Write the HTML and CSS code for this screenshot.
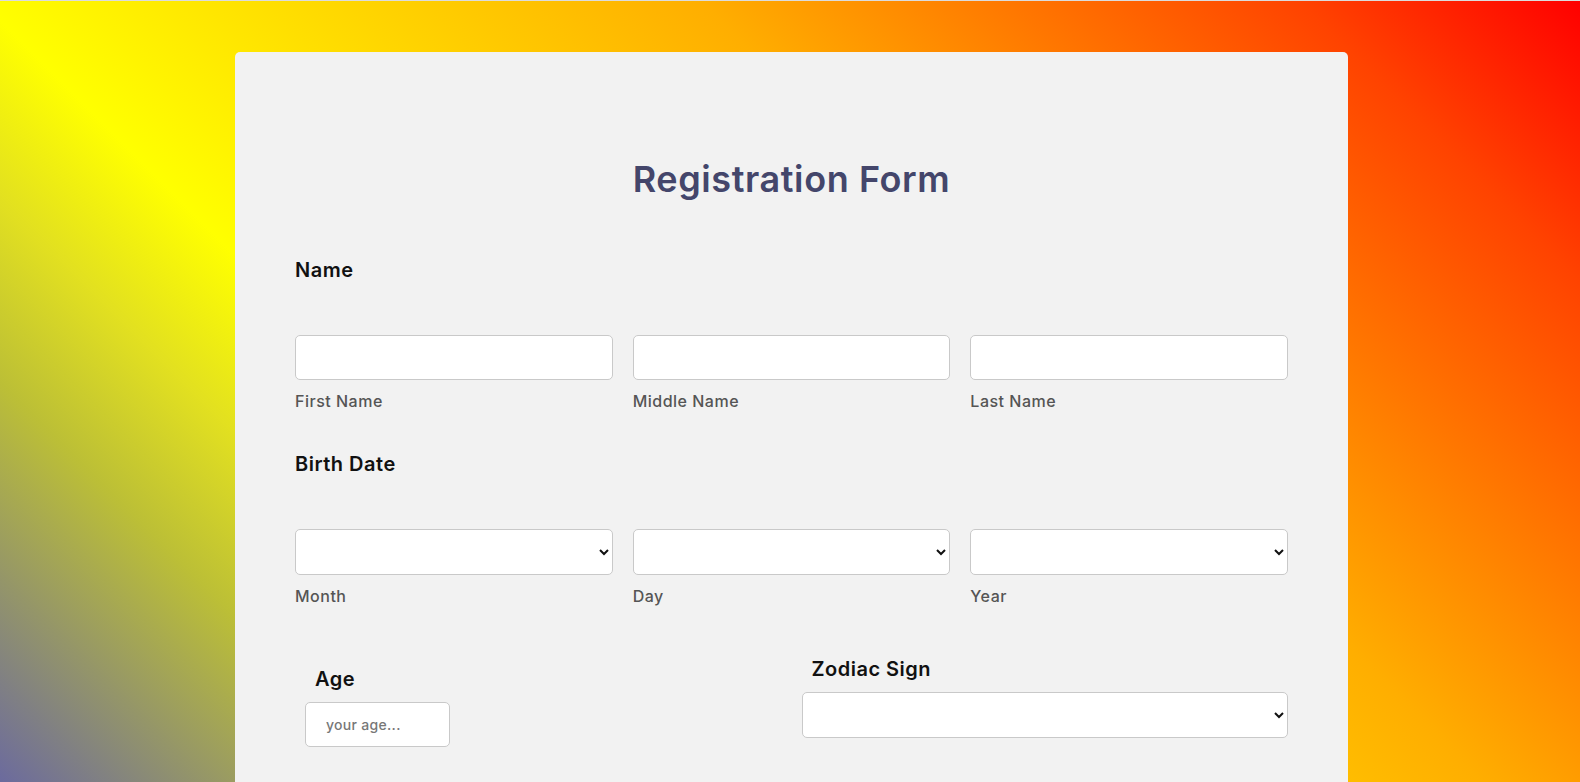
FILE: index.html
```html
<!DOCTYPE html>
<html lang="en">
<head>
<meta charset="utf-8">
<title>Registration Form</title>
<link rel="stylesheet" href="styles.css">
</head>
<body>
<div class="card">
  <h1 class="title">Registration Form</h1>

  <div class="group">
    <div class="group-label">Name</div>
    <div class="grid3">
      <div class="field"><input class="box" type="text"><span class="hint">First Name</span></div>
      <div class="field"><input class="box" type="text"><span class="hint">Middle Name</span></div>
      <div class="field"><input class="box" type="text"><span class="hint">Last Name</span></div>
    </div>
  </div>

  <div class="group group-birth">
    <div class="group-label">Birth Date</div>
    <div class="grid3">
      <div class="field"><select class="box sel"></select><span class="hint">Month</span></div>
      <div class="field"><select class="box sel"></select><span class="hint">Day</span></div>
      <div class="field"><select class="box sel"></select><span class="hint">Year</span></div>
    </div>
  </div>

  <div class="grid2">
    <div class="age">
      <label class="small-label">Age</label>
      <input class="box age-input" type="text" placeholder="your age...">
    </div>
    <div class="zodiac">
      <label class="small-label">Zodiac Sign</label>
      <select class="box sel"></select>
    </div>
  </div>
</div>
</body>
</html>
```

FILE: styles.css
```css
html {
  margin: 0;
  border-top: 1px solid #dcdcdc;
  background: linear-gradient(45deg,
      #6b6a9e 0%,
      #bcbf36 17%,
      #e2e020 24.7%,
      #ffff00 32.3%,
      #ffae00 62.8%,
      #ff4300 88.1%,
      #ff0000 100%) 0 0 / 100% 782px no-repeat, #ffb000;
}

body {
  margin: 0;
  font-family: Inter, "Noto Sans", sans-serif;
  color: #111;
}

.card {
  width: 1113px;
  margin: 51px 0 0 235px;
  box-sizing: border-box;
  padding: 60px 60px 200px;
  background: #f2f2f2;
  border-radius: 5px;
}

.title {
  margin: 45px 0 57px;
  font-size: 36px;
  line-height: 44px;
  font-weight: 600;
  letter-spacing: 0.6px;
  color: #44466b;
  text-align: center;
}

.group-label {
  font-size: 20px;
  line-height: 24px;
  font-weight: 600;
  letter-spacing: 0.5px;
  margin-bottom: 53px;
}

.group-birth {
  margin-top: 41px;
}

.grid3 {
  display: grid;
  grid-template-columns: repeat(3, 1fr);
  gap: 20px;
}

.field {
  display: flex;
  flex-direction: column;
}

.box {
  box-sizing: border-box;
  height: 45px;
  border: 1px solid #c9c9c9;
  border-radius: 5px;
  background: #fff;
  font-family: inherit;
  margin: 0;
}

.sel {
  height: 46px;
  width: 100%;
  color: #111;
}

.hint {
  margin-top: 11px;
  font-size: 16px;
  line-height: 20px;
  font-weight: 500;
  letter-spacing: 0.5px;
  color: #555;
}

.grid2 {
  display: grid;
  grid-template-columns: 1fr 1fr;
  gap: 20px;
  margin-top: 51px;
}

.age,
.zodiac {
  display: flex;
  flex-direction: column;
  align-items: flex-start;
}

.age {
  margin: 10px;
}

.zodiac .sel {
  width: 100%;
}

.small-label {
  font-size: 20px;
  line-height: 24px;
  font-weight: 600;
  letter-spacing: 0.5px;
  padding-left: 10px;
  margin-bottom: 11px;
}

.age-input {
  width: 145px;
  padding: 0 0 0 20px;
  font-size: 14px;
  font-weight: 500;
  letter-spacing: 0.3px;
  color: #333;
}

.age-input::placeholder {
  color: #777;
}
```
